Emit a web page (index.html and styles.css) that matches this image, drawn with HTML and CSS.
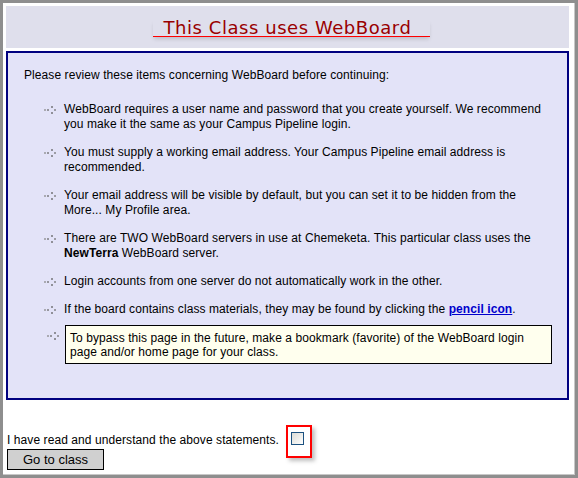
FILE: index.html
```html
<!DOCTYPE html>
<html>
<head>
<meta charset="utf-8">
<title>This Class uses WebBoard</title>
<link rel="stylesheet" href="styles.css">
</head>
<body>
<div class="frame">
  <div class="header"><span class="title">This Class uses WebBoard</span></div>
  <div class="panel">
    <p class="intro">Please review these items concerning WebBoard before continuing:</p>
    <ul class="items">
      <li><svg class="bullet" width="14" height="10" viewBox="0 0 14 10"><rect x="0" y="4" width="2" height="2" fill="#aaaab2"/><rect x="3" y="4" width="2" height="2" fill="#96969e"/><rect x="7" y="1" width="2" height="2" fill="#909098"/><rect x="7" y="7" width="2" height="2" fill="#909098"/><rect x="10" y="4" width="2" height="2" fill="#9c9ca4"/></svg><span>WebBoard requires a user name and password that you create yourself. We recommend you make it the same as your Campus Pipeline login.</span></li>
      <li><svg class="bullet" width="14" height="10" viewBox="0 0 14 10"><rect x="0" y="4" width="2" height="2" fill="#aaaab2"/><rect x="3" y="4" width="2" height="2" fill="#96969e"/><rect x="7" y="1" width="2" height="2" fill="#909098"/><rect x="7" y="7" width="2" height="2" fill="#909098"/><rect x="10" y="4" width="2" height="2" fill="#9c9ca4"/></svg><span>You must supply a working email address. Your Campus Pipeline email address is recommended.</span></li>
      <li><svg class="bullet" width="14" height="10" viewBox="0 0 14 10"><rect x="0" y="4" width="2" height="2" fill="#aaaab2"/><rect x="3" y="4" width="2" height="2" fill="#96969e"/><rect x="7" y="1" width="2" height="2" fill="#909098"/><rect x="7" y="7" width="2" height="2" fill="#909098"/><rect x="10" y="4" width="2" height="2" fill="#9c9ca4"/></svg><span>Your email address will be visible by default, but you can set it to be hidden from the More... My Profile area.</span></li>
      <li><svg class="bullet" width="14" height="10" viewBox="0 0 14 10"><rect x="0" y="4" width="2" height="2" fill="#aaaab2"/><rect x="3" y="4" width="2" height="2" fill="#96969e"/><rect x="7" y="1" width="2" height="2" fill="#909098"/><rect x="7" y="7" width="2" height="2" fill="#909098"/><rect x="10" y="4" width="2" height="2" fill="#9c9ca4"/></svg><span>There are TWO WebBoard servers in use at Chemeketa. This particular class uses the <b>NewTerra</b> WebBoard server.</span></li>
      <li><svg class="bullet" width="14" height="10" viewBox="0 0 14 10"><rect x="0" y="4" width="2" height="2" fill="#aaaab2"/><rect x="3" y="4" width="2" height="2" fill="#96969e"/><rect x="7" y="1" width="2" height="2" fill="#909098"/><rect x="7" y="7" width="2" height="2" fill="#909098"/><rect x="10" y="4" width="2" height="2" fill="#9c9ca4"/></svg><span>Login accounts from one server do not automatically work in the other.</span></li>
      <li class="before-tip"><svg class="bullet" width="14" height="10" viewBox="0 0 14 10"><rect x="0" y="4" width="2" height="2" fill="#aaaab2"/><rect x="3" y="4" width="2" height="2" fill="#96969e"/><rect x="7" y="1" width="2" height="2" fill="#909098"/><rect x="7" y="7" width="2" height="2" fill="#909098"/><rect x="10" y="4" width="2" height="2" fill="#9c9ca4"/></svg><span>If the board contains class materials, they may be found by clicking the <a class="link" href="#">pencil icon</a>.</span></li>
      <li class="tip-item"><svg class="bullet tip-bullet" width="14" height="10" viewBox="0 0 14 10"><rect x="0" y="4" width="2" height="2" fill="#aaaab2"/><rect x="3" y="4" width="2" height="2" fill="#96969e"/><rect x="7" y="1" width="2" height="2" fill="#909098"/><rect x="7" y="7" width="2" height="2" fill="#909098"/><rect x="10" y="4" width="2" height="2" fill="#9c9ca4"/></svg><div class="tip">To bypass this page in the future, make a bookmark (favorite) of the WebBoard login page and/or home page for your class.</div></li>
    </ul>
  </div>
  <div class="agree">
    <div class="agree-line">I have read and understand the above statements.<span class="check-wrap"><span class="check"></span><span class="highlight"></span></span></div>
    <button class="go" type="button">Go to class</button>
  </div>
</div>
</body>
</html>
```

FILE: styles.css
```css
html, body {
  margin: 0;
  padding: 0;
  background: #ffffff;
}

.frame {
  box-sizing: border-box;
  width: 578px;
  height: 478px;
  border: 3px solid #8e8e8e;
  box-shadow: inset -1px -1px 0 #c8c8c8;
  padding: 3px 6px 0 3px;
  font-family: "Liberation Sans", Arial, sans-serif;
  font-size: 12px;
  letter-spacing: 0.08px;
  color: #000000;
}

.header {
  box-sizing: border-box;
  height: 42px;
  background: #dfdfec;
  padding: 14px 0 0 8px;
  text-align: center;
}

.title {
  display: inline-block;
  font-family: "DejaVu Sans", Verdana, sans-serif;
  font-size: 18px;
  letter-spacing: 0.55px;
  line-height: 16px;
  color: #990000;
  padding: 0 19px 0 11px;
  border-bottom: 1px solid #ff0000;
  box-shadow: 0 3px 4px -1px rgba(0, 0, 0, 0.15);
}

.panel {
  margin-top: 3px;
  border: 2px solid #000080;
  background: #e3e3f8;
  padding: 15px 15px 34px 16px;
}

.intro {
  margin: 0 0 19px 0;
  line-height: 15px;
}

.items {
  list-style: none;
  margin: 0;
  padding: 0 0 0 20px;
}

.items li {
  display: flex;
  align-items: flex-start;
  line-height: 15px;
  margin-bottom: 13px;
}

.items li.before-tip {
  margin-bottom: 8px;
}

.items li.tip-item {
  margin-bottom: 0;
}

.bullet {
  flex: none;
  margin: 3px 6px 0 0;
}

.tip-bullet {
  margin: 6px 4px 0 3px;
}

.link {
  color: #0000cc;
  font-weight: bold;
  text-decoration: underline;
}

.tip {
  flex: 1;
  background: #ffffee;
  border: 1px solid #000000;
  padding: 5px 5px 4px 4px;
  line-height: 14px;
}

.agree {
  padding-left: 1px;
}

.agree-line {
  margin-top: 32px;
  line-height: 16px;
  height: 16px;
}

.check-wrap {
  position: relative;
  display: inline-block;
  vertical-align: top;
  margin-left: 12px;
  width: 13px;
  height: 13px;
}

.check {
  display: block;
  box-sizing: border-box;
  width: 13px;
  height: 13px;
  border: 1px solid #1c5180;
  background: linear-gradient(135deg, #dcdcd6 0%, #f4f4f2 70%, #ffffff 100%);
}

.highlight {
  position: absolute;
  left: -5px;
  top: -7px;
  width: 22px;
  height: 29px;
  border: 2px solid #ff0000;
  box-shadow: 3px 3px 4px rgba(0, 0, 0, 0.25);
}

.go {
  display: block;
  box-sizing: border-box;
  margin-top: 1px;
  width: 97px;
  height: 21px;
  padding: 0;
  border: 1px solid #000000;
  background: #d0d0d0;
  font-family: "Liberation Sans", Arial, sans-serif;
  font-size: 13px;
  color: #000000;
}
```
